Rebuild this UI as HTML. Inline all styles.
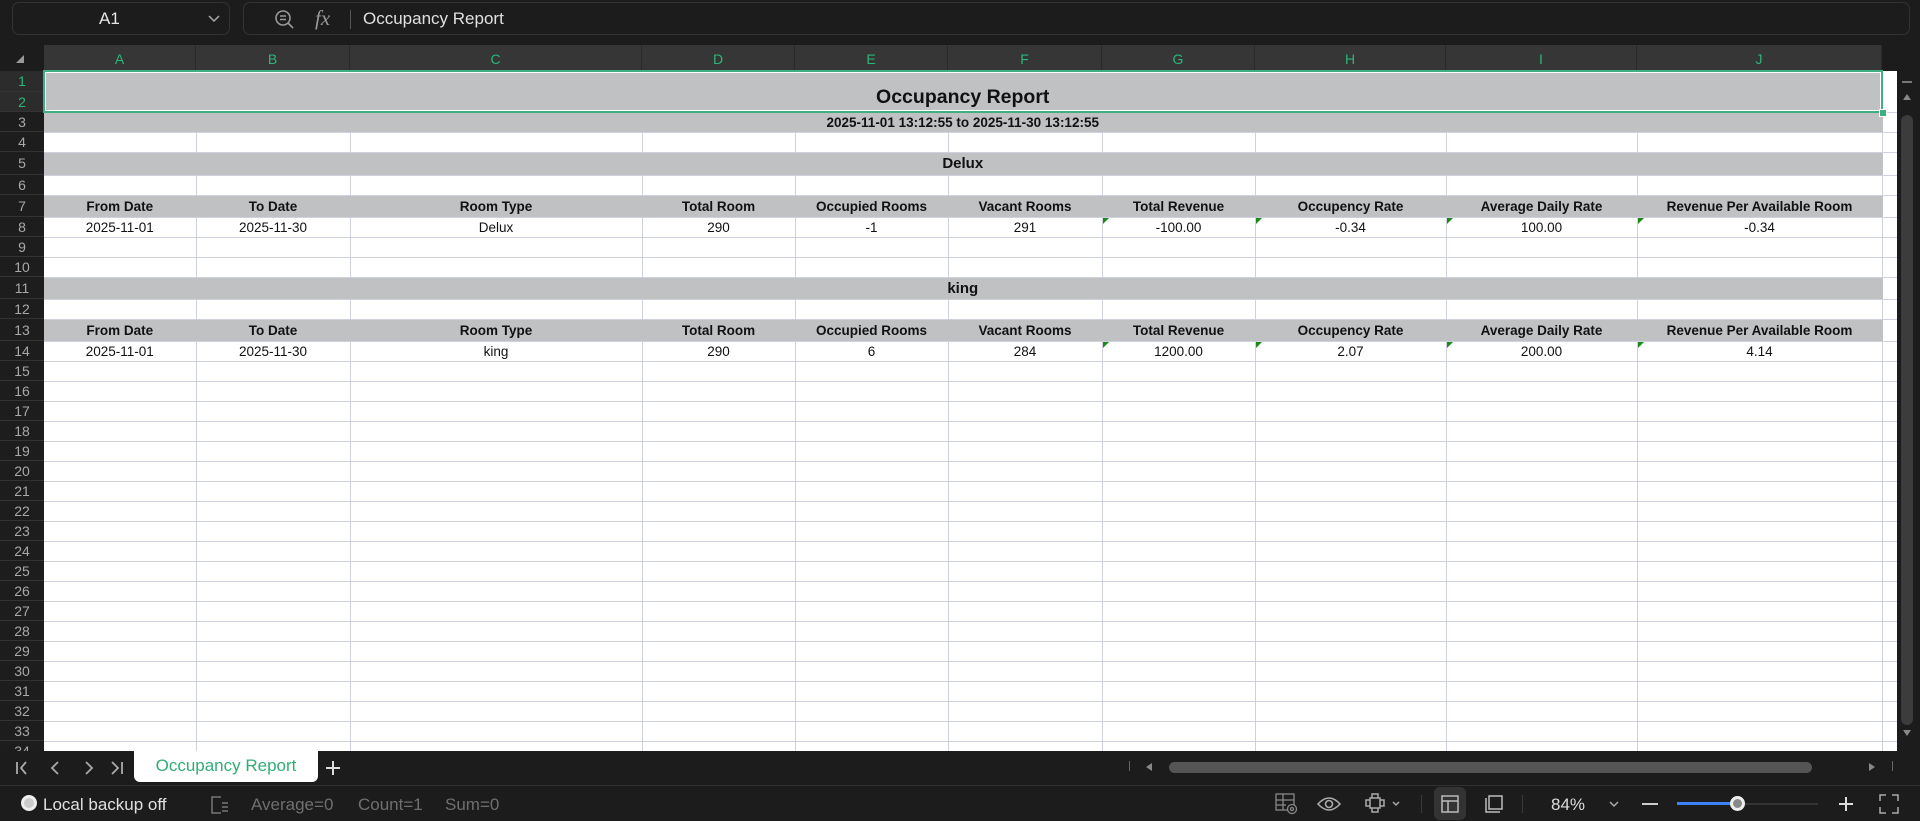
<!DOCTYPE html>
<html><head><meta charset="utf-8"><style>
*{box-sizing:border-box;margin:0;padding:0}
body{width:1920px;height:821px;background:#1c1c1c;font-family:"Liberation Sans",Arial,sans-serif;position:relative;overflow:hidden}
.abs{position:absolute}
#top{left:0;top:0;width:1920px;height:45px;background:#1c1c1c}
.nb{left:12px;top:2px;width:218px;height:33px;border:1px solid #333;border-radius:7px;color:#e6e6e6;font-size:17px}
.fb{left:243px;top:2px;width:1667px;height:33px;border:1px solid #333;border-radius:7px}
#colh{left:44px;top:45px;width:1838px;height:26px;background:#363636}
.ch{position:absolute;top:0;height:26px;line-height:28px;text-align:center;color:#2fb57a;font-size:14px;border-right:1px solid #2a2a2a}
#rowh{left:0;top:71px;width:44px;height:680px;background:#1d1d1d}
.rh{position:absolute;left:0;width:44px;text-align:center;color:#a8a8a8;font-size:14px;border-bottom:1px solid #333}
table{position:absolute;left:44px;top:71px;border-collapse:collapse;table-layout:fixed;background:#fff}
td{border-right:1px solid #cfd2de;border-bottom:1px solid #cfd2de;font-size:13.5px;color:#111;text-align:center;padding:0;white-space:nowrap;overflow:hidden;position:relative}
td.g{background:#c0c1c3;border-right-color:#c0c1c3;font-weight:bold}
td.e{border-right:none;background:#fff}
.tri{position:absolute;left:0;top:0;width:0;height:0;border-top:6px solid #1a8a1a;border-right:6px solid transparent}
#tabs{left:0;top:751px;width:1920px;height:34px;background:#1c1c1c}
#status{left:0;top:785px;width:1920px;height:36px;background:#1c1c1c;border-top:1px solid #303030}
.st{position:absolute;top:9px;font-size:17px}
</style></head><body>
<div id="top" class="abs">
 <div class="abs nb"><span class="abs" style="left:86px;top:6px">A1</span>
  <svg class="abs" style="left:194px;top:10px" width="14" height="12"><path d="M2 3l5 5 5-5" stroke="#aaa" stroke-width="1.5" fill="none"/></svg></div>
 <div class="abs fb">
  <svg class="abs" style="left:30px;top:6px" width="22" height="22"><circle cx="9" cy="9" r="7" stroke="#999" stroke-width="1.6" fill="none"/><path d="M6 7h6M6 10.5h6M14 14l5 5" stroke="#999" stroke-width="1.6"/></svg>
  <span class="abs" style="left:71px;top:3px;color:#999;font-family:'Liberation Serif',serif;font-style:italic;font-size:21px">fx</span>
  <div class="abs" style="left:106px;top:7px;width:1px;height:19px;background:#555"></div>
  <span class="abs" style="left:119px;top:6px;color:#e0e0e0;font-size:17px">Occupancy Report</span>
 </div>
</div>
<div class="abs" style="left:0;top:45px;width:44px;height:26px;background:#1c1c1c"><svg class="abs" style="left:15px;top:9px" width="10" height="10"><path d="M9 1V9H1z" fill="#999"/></svg></div>
<div id="colh" class="abs">
 <div class="ch" style="left:0;width:152px">A</div><div class="ch" style="left:152px;width:154px">B</div><div class="ch" style="left:306px;width:292px">C</div><div class="ch" style="left:598px;width:153px">D</div><div class="ch" style="left:751px;width:153px">E</div><div class="ch" style="left:904px;width:154px">F</div><div class="ch" style="left:1058px;width:153px">G</div><div class="ch" style="left:1211px;width:191px">H</div><div class="ch" style="left:1402px;width:191px">I</div><div class="ch" style="left:1593px;width:245px">J</div>
</div>
<div class="abs" style="left:1882px;top:45px;width:38px;height:26px;background:#1c1c1c"></div>
<div id="rowh" class="abs">
 <div class="rh" style="top:0;height:21px;line-height:21px;background:#2c2c2c;color:#2fb57a">1</div>
 <div class="rh" style="top:21px;height:20px;line-height:20px;background:#2c2c2c;color:#2fb57a">2</div>
 <div class="rh" style="top:41px;height:20px;line-height:20px">3</div>
 <div class="rh" style="top:61px;height:20px;line-height:20px">4</div>
 <div class="rh" style="top:81px;height:23px;line-height:23px">5</div>
 <div class="rh" style="top:104px;height:20px;line-height:20px">6</div>
 <div class="rh" style="top:124px;height:22px;line-height:22px">7</div>
 <div class="rh" style="top:146px;height:20px;line-height:20px">8</div>
 <div class="rh" style="top:166px;height:20px;line-height:20px">9</div>
 <div class="rh" style="top:186px;height:20px;line-height:20px">10</div>
 <div class="rh" style="top:206px;height:22px;line-height:22px">11</div>
 <div class="rh" style="top:228px;height:20px;line-height:20px">12</div>
 <div class="rh" style="top:248px;height:22px;line-height:22px">13</div>
 <div class="rh" style="top:270px;height:20px;line-height:20px">14</div>
 <div class="rh" style="top:290px;height:20px;line-height:20px">15</div>
 <div class="rh" style="top:310px;height:20px;line-height:20px">16</div>
 <div class="rh" style="top:330px;height:20px;line-height:20px">17</div>
 <div class="rh" style="top:350px;height:20px;line-height:20px">18</div>
 <div class="rh" style="top:370px;height:20px;line-height:20px">19</div>
 <div class="rh" style="top:390px;height:20px;line-height:20px">20</div>
 <div class="rh" style="top:410px;height:20px;line-height:20px">21</div>
 <div class="rh" style="top:430px;height:20px;line-height:20px">22</div>
 <div class="rh" style="top:450px;height:20px;line-height:20px">23</div>
 <div class="rh" style="top:470px;height:20px;line-height:20px">24</div>
 <div class="rh" style="top:490px;height:20px;line-height:20px">25</div>
 <div class="rh" style="top:510px;height:20px;line-height:20px">26</div>
 <div class="rh" style="top:530px;height:20px;line-height:20px">27</div>
 <div class="rh" style="top:550px;height:20px;line-height:20px">28</div>
 <div class="rh" style="top:570px;height:20px;line-height:20px">29</div>
 <div class="rh" style="top:590px;height:20px;line-height:20px">30</div>
 <div class="rh" style="top:610px;height:20px;line-height:20px">31</div>
 <div class="rh" style="top:630px;height:20px;line-height:20px">32</div>
 <div class="rh" style="top:650px;height:20px;line-height:20px">33</div>
 <div class="rh" style="top:670px;height:20px;line-height:20px">34</div>
</div>
<table>
<colgroup><col style="width:152px"><col style="width:154px"><col style="width:292px"><col style="width:153px"><col style="width:153px"><col style="width:154px"><col style="width:153px"><col style="width:191px"><col style="width:191px"><col style="width:245px"><col style="width:15px"></colgroup>
<tr style="height:41px"><td class="g" colspan="10" style="font-size:19.5px;padding-top:12px">Occupancy Report</td><td class="e"></td></tr>
<tr style="height:20px"><td class="g" colspan="10" style="font-size:13.5px">2025-11-01 13:12:55 to 2025-11-30 13:12:55</td><td class="e"></td></tr>
<tr style="height:20px"><td></td><td></td><td></td><td></td><td></td><td></td><td></td><td></td><td></td><td></td><td class="e"></td></tr>
<tr style="height:23px"><td class="g" colspan="10" style="font-size:15px">Delux</td><td class="e"></td></tr>
<tr style="height:20px"><td></td><td></td><td></td><td></td><td></td><td></td><td></td><td></td><td></td><td></td><td class="e"></td></tr>
<tr style="height:22px"><td class="g">From Date</td><td class="g">To Date</td><td class="g">Room Type</td><td class="g">Total Room</td><td class="g">Occupied Rooms</td><td class="g">Vacant Rooms</td><td class="g">Total Revenue</td><td class="g">Occupency Rate</td><td class="g">Average Daily Rate</td><td class="g">Revenue Per Available Room</td><td class="e"></td></tr>
<tr style="height:20px"><td>2025-11-01</td><td>2025-11-30</td><td>Delux</td><td>290</td><td>-1</td><td>291</td><td><i class="tri"></i>-100.00</td><td><i class="tri"></i>-0.34</td><td><i class="tri"></i>100.00</td><td><i class="tri"></i>-0.34</td><td class="e"></td></tr>
<tr style="height:20px"><td></td><td></td><td></td><td></td><td></td><td></td><td></td><td></td><td></td><td></td><td class="e"></td></tr>
<tr style="height:20px"><td></td><td></td><td></td><td></td><td></td><td></td><td></td><td></td><td></td><td></td><td class="e"></td></tr>
<tr style="height:22px"><td class="g" colspan="10" style="font-size:15px">king</td><td class="e"></td></tr>
<tr style="height:20px"><td></td><td></td><td></td><td></td><td></td><td></td><td></td><td></td><td></td><td></td><td class="e"></td></tr>
<tr style="height:22px"><td class="g">From Date</td><td class="g">To Date</td><td class="g">Room Type</td><td class="g">Total Room</td><td class="g">Occupied Rooms</td><td class="g">Vacant Rooms</td><td class="g">Total Revenue</td><td class="g">Occupency Rate</td><td class="g">Average Daily Rate</td><td class="g">Revenue Per Available Room</td><td class="e"></td></tr>
<tr style="height:20px"><td>2025-11-01</td><td>2025-11-30</td><td>king</td><td>290</td><td>6</td><td>284</td><td><i class="tri"></i>1200.00</td><td><i class="tri"></i>2.07</td><td><i class="tri"></i>200.00</td><td><i class="tri"></i>4.14</td><td class="e"></td></tr>
<tr style="height:20px"><td></td><td></td><td></td><td></td><td></td><td></td><td></td><td></td><td></td><td></td><td class="e"></td></tr>
<tr style="height:20px"><td></td><td></td><td></td><td></td><td></td><td></td><td></td><td></td><td></td><td></td><td class="e"></td></tr>
<tr style="height:20px"><td></td><td></td><td></td><td></td><td></td><td></td><td></td><td></td><td></td><td></td><td class="e"></td></tr>
<tr style="height:20px"><td></td><td></td><td></td><td></td><td></td><td></td><td></td><td></td><td></td><td></td><td class="e"></td></tr>
<tr style="height:20px"><td></td><td></td><td></td><td></td><td></td><td></td><td></td><td></td><td></td><td></td><td class="e"></td></tr>
<tr style="height:20px"><td></td><td></td><td></td><td></td><td></td><td></td><td></td><td></td><td></td><td></td><td class="e"></td></tr>
<tr style="height:20px"><td></td><td></td><td></td><td></td><td></td><td></td><td></td><td></td><td></td><td></td><td class="e"></td></tr>
<tr style="height:20px"><td></td><td></td><td></td><td></td><td></td><td></td><td></td><td></td><td></td><td></td><td class="e"></td></tr>
<tr style="height:20px"><td></td><td></td><td></td><td></td><td></td><td></td><td></td><td></td><td></td><td></td><td class="e"></td></tr>
<tr style="height:20px"><td></td><td></td><td></td><td></td><td></td><td></td><td></td><td></td><td></td><td></td><td class="e"></td></tr>
<tr style="height:20px"><td></td><td></td><td></td><td></td><td></td><td></td><td></td><td></td><td></td><td></td><td class="e"></td></tr>
<tr style="height:20px"><td></td><td></td><td></td><td></td><td></td><td></td><td></td><td></td><td></td><td></td><td class="e"></td></tr>
<tr style="height:20px"><td></td><td></td><td></td><td></td><td></td><td></td><td></td><td></td><td></td><td></td><td class="e"></td></tr>
<tr style="height:20px"><td></td><td></td><td></td><td></td><td></td><td></td><td></td><td></td><td></td><td></td><td class="e"></td></tr>
<tr style="height:20px"><td></td><td></td><td></td><td></td><td></td><td></td><td></td><td></td><td></td><td></td><td class="e"></td></tr>
<tr style="height:20px"><td></td><td></td><td></td><td></td><td></td><td></td><td></td><td></td><td></td><td></td><td class="e"></td></tr>
<tr style="height:20px"><td></td><td></td><td></td><td></td><td></td><td></td><td></td><td></td><td></td><td></td><td class="e"></td></tr>
<tr style="height:20px"><td></td><td></td><td></td><td></td><td></td><td></td><td></td><td></td><td></td><td></td><td class="e"></td></tr>
<tr style="height:20px"><td></td><td></td><td></td><td></td><td></td><td></td><td></td><td></td><td></td><td></td><td class="e"></td></tr>
<tr style="height:20px"><td></td><td></td><td></td><td></td><td></td><td></td><td></td><td></td><td></td><td></td><td class="e"></td></tr>
<tr style="height:20px"><td></td><td></td><td></td><td></td><td></td><td></td><td></td><td></td><td></td><td></td><td class="e"></td></tr>
</table>
<!-- selection -->
<div class="abs" style="left:43px;top:70px;width:1840px;height:43px;border:2px solid #3fae80;box-shadow:inset 0 0 0 1px #fff"></div>
<div class="abs" style="left:1879px;top:109px;width:8px;height:8px;background:#3fae80;border:1px solid #fff"></div>
<!-- vertical scrollbar -->
<div class="abs" style="left:1897px;top:71px;width:23px;height:680px;background:#1c1c1c">
 <div class="abs" style="left:5px;top:10px;width:10px;height:2px;background:#777"></div>
 <svg class="abs" style="left:5px;top:22px" width="10" height="8"><path d="M5 1L9 7H1z" fill="#888"/></svg>
 <div class="abs" style="left:4px;top:44px;width:12px;height:610px;border-radius:6px;background:#3c3c3c"></div>
 <svg class="abs" style="left:5px;top:658px" width="10" height="8"><path d="M5 7L9 1H1z" fill="#888"/></svg>
</div>
<div id="tabs" class="abs">
 <svg class="abs" style="left:14px;top:8px" width="110" height="18"><g stroke="#aaa" stroke-width="1.8" fill="none"><path d="M3 3v12M12 3L7 9l5 6"/><path d="M44 3L38 9l6 6"/><path d="M72 3l6 6-6 6"/><path d="M98 3l6 6-6 6M108 3v12"/></g></svg>
 <div class="abs" style="left:134px;top:0;width:184px;height:31px;background:#fff;border-radius:0 0 6px 6px;color:#2fae74;font-size:17px;text-align:center;line-height:30px">Occupancy Report</div>
 <svg class="abs" style="left:325px;top:9px" width="16" height="16"><path d="M8 1v14M1 8h14" stroke="#ddd" stroke-width="2"/></svg>
 <div class="abs" style="left:1129px;top:10px;width:1px;height:10px;background:#666"></div>
 <svg class="abs" style="left:1145px;top:11px" width="8" height="10"><path d="M7 1v8L1 5z" fill="#888"/></svg>
 <div class="abs" style="left:1169px;top:11px;width:643px;height:11px;border-radius:6px;background:#555"></div>
 <svg class="abs" style="left:1868px;top:11px" width="8" height="10"><path d="M1 1v8l6-4z" fill="#888"/></svg>
 <div class="abs" style="left:1892px;top:10px;width:1px;height:10px;background:#666"></div>
</div>
<div id="status" class="abs">
 <div class="abs" style="left:21px;top:9px;width:16px;height:16px;border-radius:50%;background:#ccc;border:3px solid #eee"></div>
 <span class="st" style="left:43px;color:#e0e0e0">Local backup off</span>
 <svg class="abs" style="left:210px;top:9px" width="20" height="20"><path d="M9 2H2v16h7M8 2h3M8 18h3M12 8h6M12 12h6M12 16h6" stroke="#777" stroke-width="1.5" fill="none"/></svg>
 <span class="st" style="left:251px;color:#6f6f6f">Average=0</span>
 <span class="st" style="left:358px;color:#6f6f6f">Count=1</span>
 <span class="st" style="left:445px;color:#6f6f6f">Sum=0</span>
 <svg class="abs" style="left:1275px;top:7px" width="24" height="22"><g stroke="#888" stroke-width="1.3" fill="none"><rect x="1" y="1" width="18" height="16"/><path d="M1 7h18M1 12h10M8 1v16"/><circle cx="17" cy="16" r="4.5" fill="#1c1c1c"/><circle cx="17" cy="16" r="1.5"/></g></svg>
 <svg class="abs" style="left:1317px;top:8px" width="24" height="18"><g stroke="#aaa" stroke-width="1.6" fill="none"><path d="M1 10Q12-2 23 10Q12 22 1 10z"/><circle cx="12" cy="10" r="3.5"/></g></svg>
 <svg class="abs" style="left:1364px;top:7px" width="38" height="22"><g stroke="#aaa" stroke-width="1.5" fill="none"><rect x="6" y="5" width="10" height="10"/><path d="M8 5V1h6v4M8 15v4h6v-4M6 7H2v6h4M16 7h4v6h-4"/><path d="M29 9l3 3 3-3"/></g></svg>
 <div class="abs" style="left:1421px;top:9px;width:1px;height:18px;background:#3a3a3a"></div>
 <div class="abs" style="left:1434px;top:1px;width:32px;height:33px;border-radius:6px;background:#333"></div>
 <svg class="abs" style="left:1441px;top:9px" width="18" height="18"><g stroke="#bbb" stroke-width="1.5" fill="none"><rect x="1" y="1" width="16" height="16"/><path d="M1 6h16M7 6v11"/></g></svg>
 <svg class="abs" style="left:1485px;top:9px" width="18" height="18"><g stroke="#bbb" stroke-width="1.5" fill="none"><path d="M1 3v14h14M4 1h13v13H4z"/></g></svg>
 <div class="abs" style="left:1522px;top:9px;width:1px;height:18px;background:#3a3a3a"></div>
 <span class="st" style="left:1551px;color:#ddd">84%</span>
 <svg class="abs" style="left:1608px;top:13px" width="12" height="10"><path d="M2 3l4 4 4-4" stroke="#aaa" stroke-width="1.5" fill="none"/></svg>
 <div class="abs" style="left:1642px;top:17px;width:16px;height:2px;background:#ccc"></div>
 <div class="abs" style="left:1677px;top:17px;width:141px;height:2px;background:#333"></div>
 <div class="abs" style="left:1677px;top:16px;width:60px;height:3px;background:#3b82f6"></div>
 <div class="abs" style="left:1730px;top:10px;width:15px;height:15px;border-radius:50%;background:#888;border:3px solid #eee"></div>
 <svg class="abs" style="left:1838px;top:10px" width="16" height="16"><path d="M8 1v14M1 8h14" stroke="#ddd" stroke-width="2"/></svg>
 <svg class="abs" style="left:1879px;top:8px" width="20" height="20"><g stroke="#aaa" stroke-width="1.5" fill="none"><path d="M1 7V1h6M13 1h6v6M19 13v6h-6M7 19H1v-6"/></g></svg>
</div>
</body></html>
